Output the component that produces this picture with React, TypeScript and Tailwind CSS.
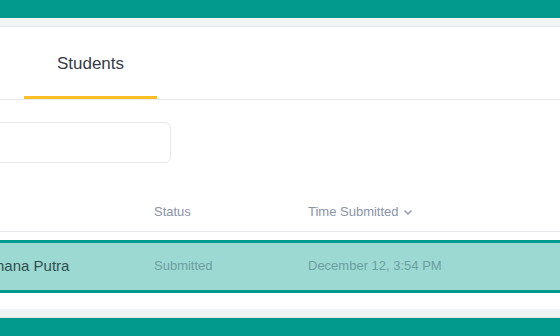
export default function App() {
  return (
    <div className="flex h-[336px] w-[560px] flex-col overflow-hidden bg-white font-['Liberation_Sans',Arial,sans-serif]">
      {/* top bar */}
      <div className="h-[18px] shrink-0 bg-[#029a8c]" />
      <div className="h-[9px] shrink-0 border-b border-[#e6e7ea] bg-[#f3f4f6]" />

      {/* tabs */}
      <div className="flex h-[73px] shrink-0 items-end border-b border-[#e8e9ec] pl-6">
        <button
          type="button"
          className="flex h-full w-[133px] items-center justify-center border-b-[3px] border-[#fbbf24] pt-[4px] font-['Liberation_Sans',Arial,sans-serif] text-[17px] text-[#363b46]"
        >
          Students
        </button>
      </div>

      {/* search */}
      <div className="ml-[-20px] mt-[22px] h-[41px] w-[191px] shrink-0 rounded-md border border-[#e5e7eb]" />

      {/* table header */}
      <div className="mt-[39px] flex h-[30px] shrink-0 items-start border-b border-[#e5e7eb] text-[13px] leading-[20px] text-[#8a93a6]">
        <div className="w-[154px]" />
        <div className="w-[154px]">Status</div>
        <div className="flex items-center gap-1">
          Time Submitted
          <svg width="10" height="10" viewBox="0 0 10 10" fill="none">
            <path d="M1.5 3.5 L5 7 L8.5 3.5" stroke="#8a93a6" strokeWidth="1.3" />
          </svg>
        </div>
      </div>

      {/* selected row */}
      <div className="mt-[8px] ml-[-10px] flex h-[53px] w-[580px] shrink-0 items-center border-[3px] border-[#029a8c] bg-[#9dd9d3] pb-[1px] text-[#6a9fa0]">
        <div className="w-[161px] pl-[3px] text-[15px] text-[#2f4f50]">hana Putra</div>
        <div className="w-[154px] text-[13px]">Submitted</div>
        <div className="text-[13px]">December 12, 3:54 PM</div>
      </div>

      <div className="h-[16px] shrink-0" />
      <div className="h-[9px] shrink-0 border-b border-[#e6e7ea] bg-[#f1f2f4]" />
      <div className="flex-1 bg-[#029a8c]" />
    </div>
  );
}
